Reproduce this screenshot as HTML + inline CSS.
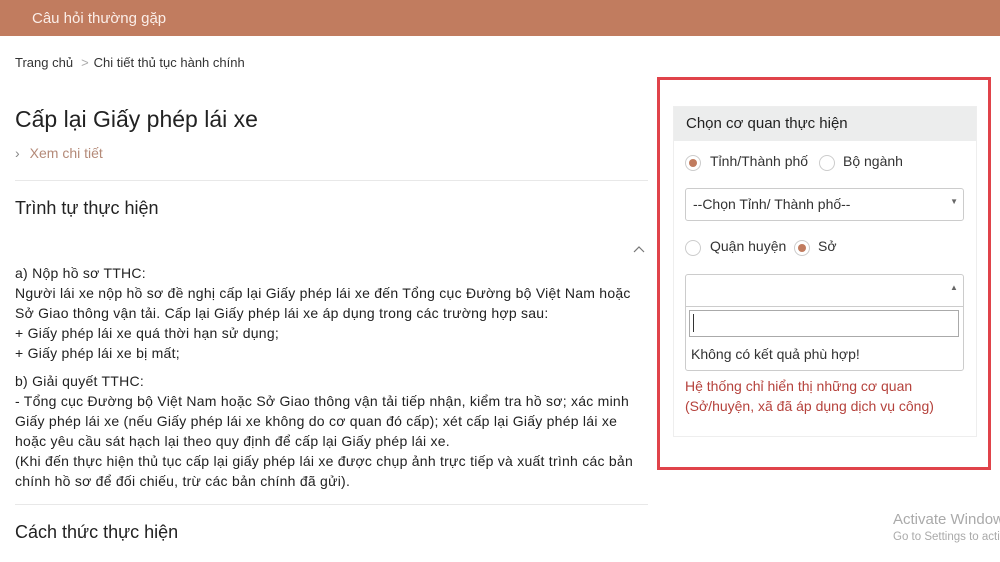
<!DOCTYPE html>
<html><head><meta charset="utf-8"><style>
body{margin:0;width:1000px;height:562px;overflow:hidden;background:#fff;font-family:"Liberation Sans","DejaVu Sans",sans-serif;color:#222;position:relative}
.top{position:absolute;left:0;top:0;width:1000px;height:36px;background:#c17c5f;color:#fbeee8;font-size:15px;line-height:38px}
.top span{position:absolute;left:32px}
.abs{position:absolute;white-space:nowrap}
.bc{left:15px;top:55px;font-size:13px;color:#333}
.bc i{font-style:normal;color:#aaa;margin:0 5px 0 8px}
h1{position:absolute;left:15px;top:106px;margin:0;font-weight:normal;font-size:23px;color:#222}
.xem{left:15px;top:145px;font-size:14px;color:#b48a78}
.xem b{font-weight:normal;color:#888;margin-right:10px}
.hr{position:absolute;left:15px;width:633px;height:1px;background:#e8e8e8}
h2{position:absolute;left:15px;margin:0;font-weight:normal;font-size:18px;color:#222}
.body{position:absolute;left:15px;top:263px;font-size:14px;line-height:20px;color:#222;white-space:nowrap;letter-spacing:0.25px}
.red{position:absolute;left:657px;top:77px;width:328px;height:387px;border:3px solid #e0434a}
.panel{position:absolute;left:673px;top:106px;width:302px;height:329px;border:1px solid #eee}
.ph{position:absolute;left:0;top:0;width:302px;height:34px;background:#eceded;font-size:15px;line-height:34px}
.ph span{margin-left:12px}
.radio{position:absolute;width:14px;height:14px;border:1px solid #ccc;border-radius:50%;background:#fff}
.radio.on::after{content:"";position:absolute;left:3px;top:3px;width:8px;height:8px;border-radius:50%;background:#c17c5f}
.lbl{position:absolute;font-size:14px;color:#333;white-space:nowrap}
.sel{position:absolute;border:1px solid #ccc;border-radius:3px;background:#fff}
.err{position:absolute;left:685px;top:376px;font-size:14px;line-height:20px;color:#b5423c;white-space:nowrap}
.clip{position:absolute;left:880px;top:500px;width:120px;height:60px;overflow:hidden}
.act{position:absolute;left:13px;top:11px;color:#aaa;font-size:15px;white-space:nowrap}
.act small{display:block;font-size:11.5px;margin-top:3px}
</style></head><body>
<div class="top"><span>Câu hỏi thường gặp</span></div>
<div class="abs bc">Trang chủ<i>&gt;</i>Chi tiết thủ tục hành chính</div>
<h1>Cấp lại Giấy phép lái xe</h1>
<div class="abs xem"><b>›</b>Xem chi tiết</div>
<div class="hr" style="top:180px"></div>
<h2 style="top:198px">Trình tự thực hiện</h2>
<svg class="abs" style="left:633px;top:246px" width="12" height="8"><path d="M1 6 L6 1 L11 6" stroke="#777" fill="none" stroke-width="1.2"/></svg>
<div class="body">a) Nộp hồ sơ TTHC:<br>Người lái xe nộp hồ sơ đề nghị cấp lại Giấy phép lái xe đến Tổng cục Đường bộ Việt Nam hoặc<br>Sở Giao thông vận tải. Cấp lại Giấy phép lái xe áp dụng trong các trường hợp sau:<br>+ Giấy phép lái xe quá thời hạn sử dụng;<br>+ Giấy phép lái xe bị mất;<br><div style="height:8px"></div>b) Giải quyết TTHC:<br>- Tổng cục Đường bộ Việt Nam hoặc Sở Giao thông vận tải tiếp nhận, kiểm tra hồ sơ; xác minh<br>Giấy phép lái xe (nếu Giấy phép lái xe không do cơ quan đó cấp); xét cấp lại Giấy phép lái xe<br>hoặc yêu cầu sát hạch lại theo quy định để cấp lại Giấy phép lái xe.<br>(Khi đến thực hiện thủ tục cấp lại giấy phép lái xe được chụp ảnh trực tiếp và xuất trình các bản<br>chính hồ sơ để đối chiếu, trừ các bản chính đã gửi).</div>
<div class="hr" style="top:504px"></div>
<h2 style="top:522px">Cách thức thực hiện</h2>

<div class="red"></div>
<div class="panel"><div class="ph"><span>Chọn cơ quan thực hiện</span></div></div>
<div class="radio on" style="left:685px;top:155px"></div>
<div class="lbl" style="left:710px;top:153px">Tỉnh/Thành phố</div>
<div class="radio" style="left:819px;top:155px"></div>
<div class="lbl" style="left:843px;top:153px">Bộ ngành</div>
<div class="sel" style="left:685px;top:188px;width:277px;height:31px"><span class="lbl" style="left:7px;top:7px">--Chọn Tỉnh/ Thành phố--</span><span class="abs" style="right:5px;top:8px;font-size:8px;color:#666">▼</span></div>
<div class="radio" style="left:685px;top:240px"></div>
<div class="lbl" style="left:710px;top:238px">Quận huyện</div>
<div class="radio on" style="left:794px;top:240px"></div>
<div class="lbl" style="left:818px;top:238px">Sở</div>
<div class="sel" style="left:685px;top:274px;width:277px;height:95px"></div>
<div class="abs" style="left:685px;top:306px;width:279px;height:1px;background:#ccc"></div>
<span class="abs" style="left:950px;top:283px;font-size:8px;color:#666">▲</span>
<div class="abs" style="left:689px;top:310px;width:268px;height:25px;border:1px solid #aaa"></div>
<div class="abs" style="left:693px;top:314px;width:1px;height:18px;background:#333"></div>
<div class="lbl" style="left:691px;top:346px">Không có kết quả phù hợp!</div>
<div class="err">Hệ thống chỉ hiển thị những cơ quan<br>(Sở/huyện, xã đã áp dụng dịch vụ công)</div>
<div class="clip"><div class="act">Activate Windows<small>Go to Settings to activate Windows.</small></div></div>
</body></html>
